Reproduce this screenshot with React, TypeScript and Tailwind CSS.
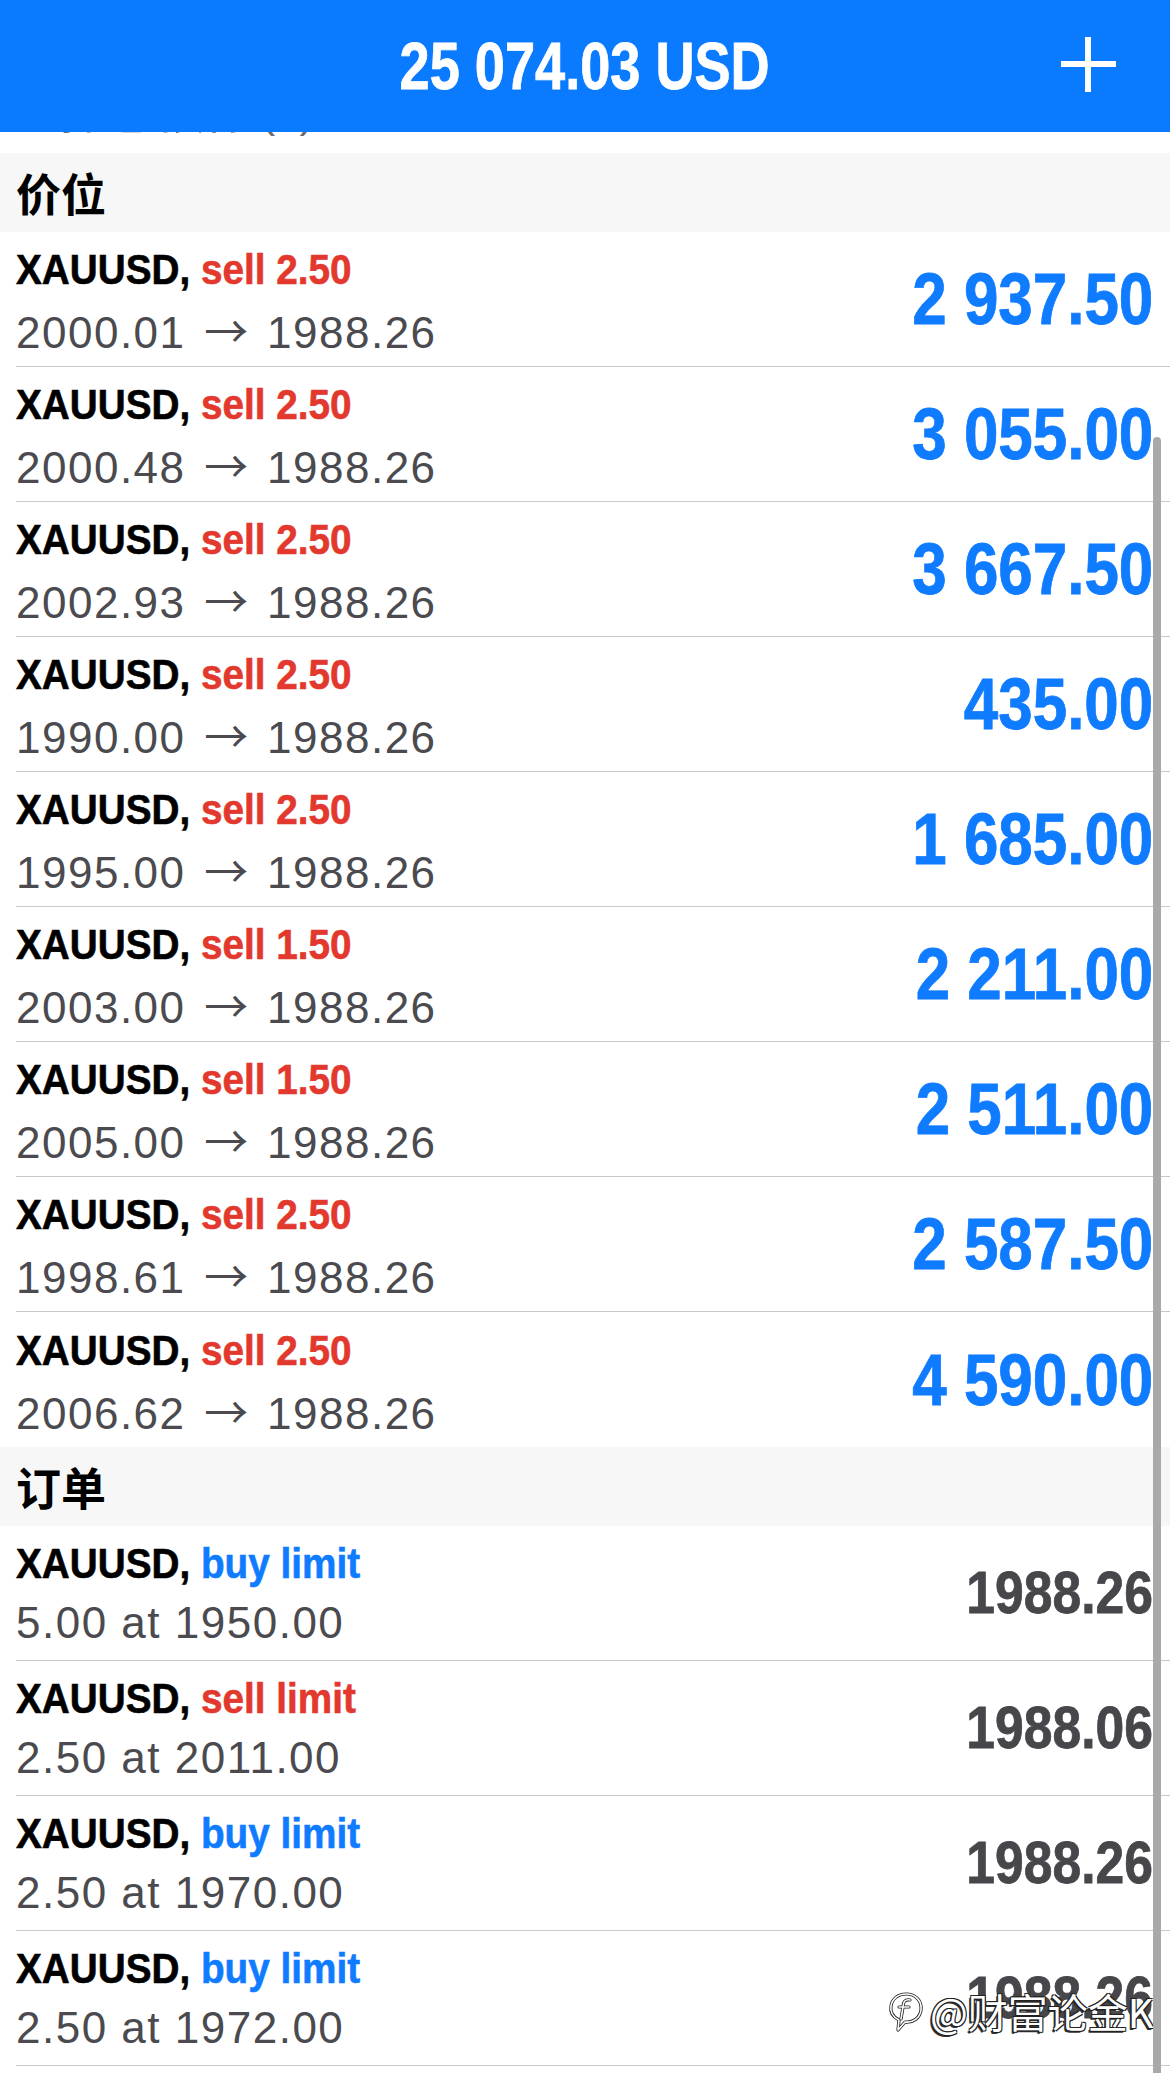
import React from "react";

const positions: [string, string, string][] = [
  ["sell 2.50", "2000.01", "2 937.50"],
  ["sell 2.50", "2000.48", "3 055.00"],
  ["sell 2.50", "2002.93", "3 667.50"],
  ["sell 2.50", "1990.00", "435.00"],
  ["sell 2.50", "1995.00", "1 685.00"],
  ["sell 1.50", "2003.00", "2 211.00"],
  ["sell 1.50", "2005.00", "2 511.00"],
  ["sell 2.50", "1998.61", "2 587.50"],
  ["sell 2.50", "2006.62", "4 590.00"],
];

const orders: [string, string, string, boolean][] = [
  ["buy limit", "5.00 at 1950.00", "1988.26", true],
  ["sell limit", "2.50 at 2011.00", "1988.06", false],
  ["buy limit", "2.50 at 1970.00", "1988.26", true],
  ["buy limit", "2.50 at 1972.00", "1988.26", true],
];

const sans = "font-['Liberation_Sans','Helvetica_Neue',Arial,sans-serif]";

function Section({ title }: { title: string }) {
  return (
    <div className="h-[79px] bg-[#f7f7f7] pl-4 flex items-center">
      <span className="text-[45px] leading-none font-semibold text-black font-['Noto_Sans_CJK_SC','Noto_Sans',sans-serif]">
        {title}
      </span>
    </div>
  );
}

function Row({
  action,
  actionColor,
  sub,
  value,
  valueClass,
  last,
}: {
  action: string;
  actionColor: string;
  sub: React.ReactNode;
  value: string;
  valueClass: string;
  last?: boolean;
}) {
  return (
    <div className="pl-4 bg-white">
      <div
        className={`h-[135px] flex items-center justify-between pr-[17px] ${
          last ? "" : "border-b border-[#c8c7cc]"
        }`}
      >
        <div className="flex flex-col gap-[8px]">
          <div className="h-[52px] leading-[52px] whitespace-nowrap">
            <span className="inline-block origin-left scale-x-90 text-[43px] font-bold text-black [-webkit-text-stroke:0.6px_currentColor]">
              XAUUSD, <span className={actionColor}>{action}</span>
            </span>
          </div>
          <div className="h-[52px] leading-[52px] text-[44px] tracking-[1.5px] text-[#4a4a4f] whitespace-nowrap">
            {sub}
          </div>
        </div>
        <span
          className={`inline-block origin-right whitespace-nowrap font-bold leading-none [-webkit-text-stroke:0.8px_currentColor] ${valueClass}`}
        >
          {value}
        </span>
      </div>
    </div>
  );
}

function Watermark() {
  return (
    <div className="absolute left-[886px] top-[1988px] flex items-center gap-[4px] pointer-events-none">
      <svg width="40" height="46" viewBox="0 0 40 46" fill="none">
        <path
          d="M20 6 C30 6 36 13 35 22 C34 30 27 35 19 34 L12 42 L13 32 C7 29 4 24 5 18 C6 11 12 6 20 6 Z"
          stroke="#222"
          strokeWidth="3.2"
          strokeLinejoin="round"
        />
        <path
          d="M20 6 C30 6 36 13 35 22 C34 30 27 35 19 34 L12 42 L13 32 C7 29 4 24 5 18 C6 11 12 6 20 6 Z"
          stroke="#fff"
          strokeWidth="1.6"
          strokeLinejoin="round"
        />
        <path d="M24 12 C19 11 17 14 17 19 L15 31 M13 19 L23 19" stroke="#222" strokeWidth="3.2" strokeLinecap="round" />
        <path d="M24 12 C19 11 17 14 17 19 L15 31 M13 19 L23 19" stroke="#fff" strokeWidth="1.6" strokeLinecap="round" />
      </svg>
      <span className="text-[40px] leading-none text-white font-['Noto_Sans_CJK_SC','Noto_Sans',sans-serif] [text-shadow:-1px_-1px_0_#222,1px_-1px_0_#222,-1px_1px_0_#222,1px_1px_0_#222,-2px_2px_0_#333]">
        @财富论金K
      </span>
    </div>
  );
}

function Arrow() {
  return (
    <span className="inline-block mx-[5px] tracking-normal font-['Noto_Sans_CJK_SC',sans-serif] text-[#4a4a4f]">
      →
    </span>
  );
}

export default function App() {
  return (
    <div className={`relative w-[1170px] h-[2073px] overflow-hidden bg-white ${sans}`}>
      <div className="relative z-10 h-[132px] bg-[#0a7aff] flex items-center justify-center">
        <span className="inline-block scale-x-82 text-[66px] font-bold leading-none text-white whitespace-nowrap [-webkit-text-stroke:0.8px_currentColor]">
          25 074.03 USD
        </span>
        <div className="absolute right-[54px] top-[37px] w-[55px] h-[55px]">
          <div className="absolute left-[24px] top-0 w-[6px] h-[55px] bg-white" />
          <div className="absolute left-0 top-[24px] w-[55px] h-[6px] bg-white" />
        </div>
      </div>
      <div className="h-[21px] overflow-hidden bg-white">
        <div className="-mt-[46px] pl-[60px] text-[44px] leading-[52px] text-[#6b6b70] whitespace-nowrap">
          持仓 预付 (9)
        </div>
      </div>

      <Section title="价位" />
      {positions.map(([a, from, v], i) => (
        <Row
          key={i}
          action={a}
          actionColor="text-[#e2382d]"
          sub={
            <>
              {from} <Arrow /> 1988.26
            </>
          }
          value={v}
          valueClass="text-[72px] text-[#0f7bff] scale-x-86"
          last={i === positions.length - 1}
        />
      ))}

      <Section title="订单" />
      {orders.map(([a, sub, v, buy], i) => (
        <Row
          key={i}
          action={a}
          actionColor={buy ? "text-[#0f7bff]" : "text-[#e2382d]"}
          sub={sub}
          value={v}
          valueClass="text-[60px] text-[#46464b] scale-x-86"
        />
      ))}
      <div className="h-[135px] bg-white" />

      <div className="absolute z-20 left-[1153px] top-[437px] w-[8px] h-[1700px] rounded-t-full bg-[#a9a9a9]" />
      <Watermark />
    </div>
  );
}
